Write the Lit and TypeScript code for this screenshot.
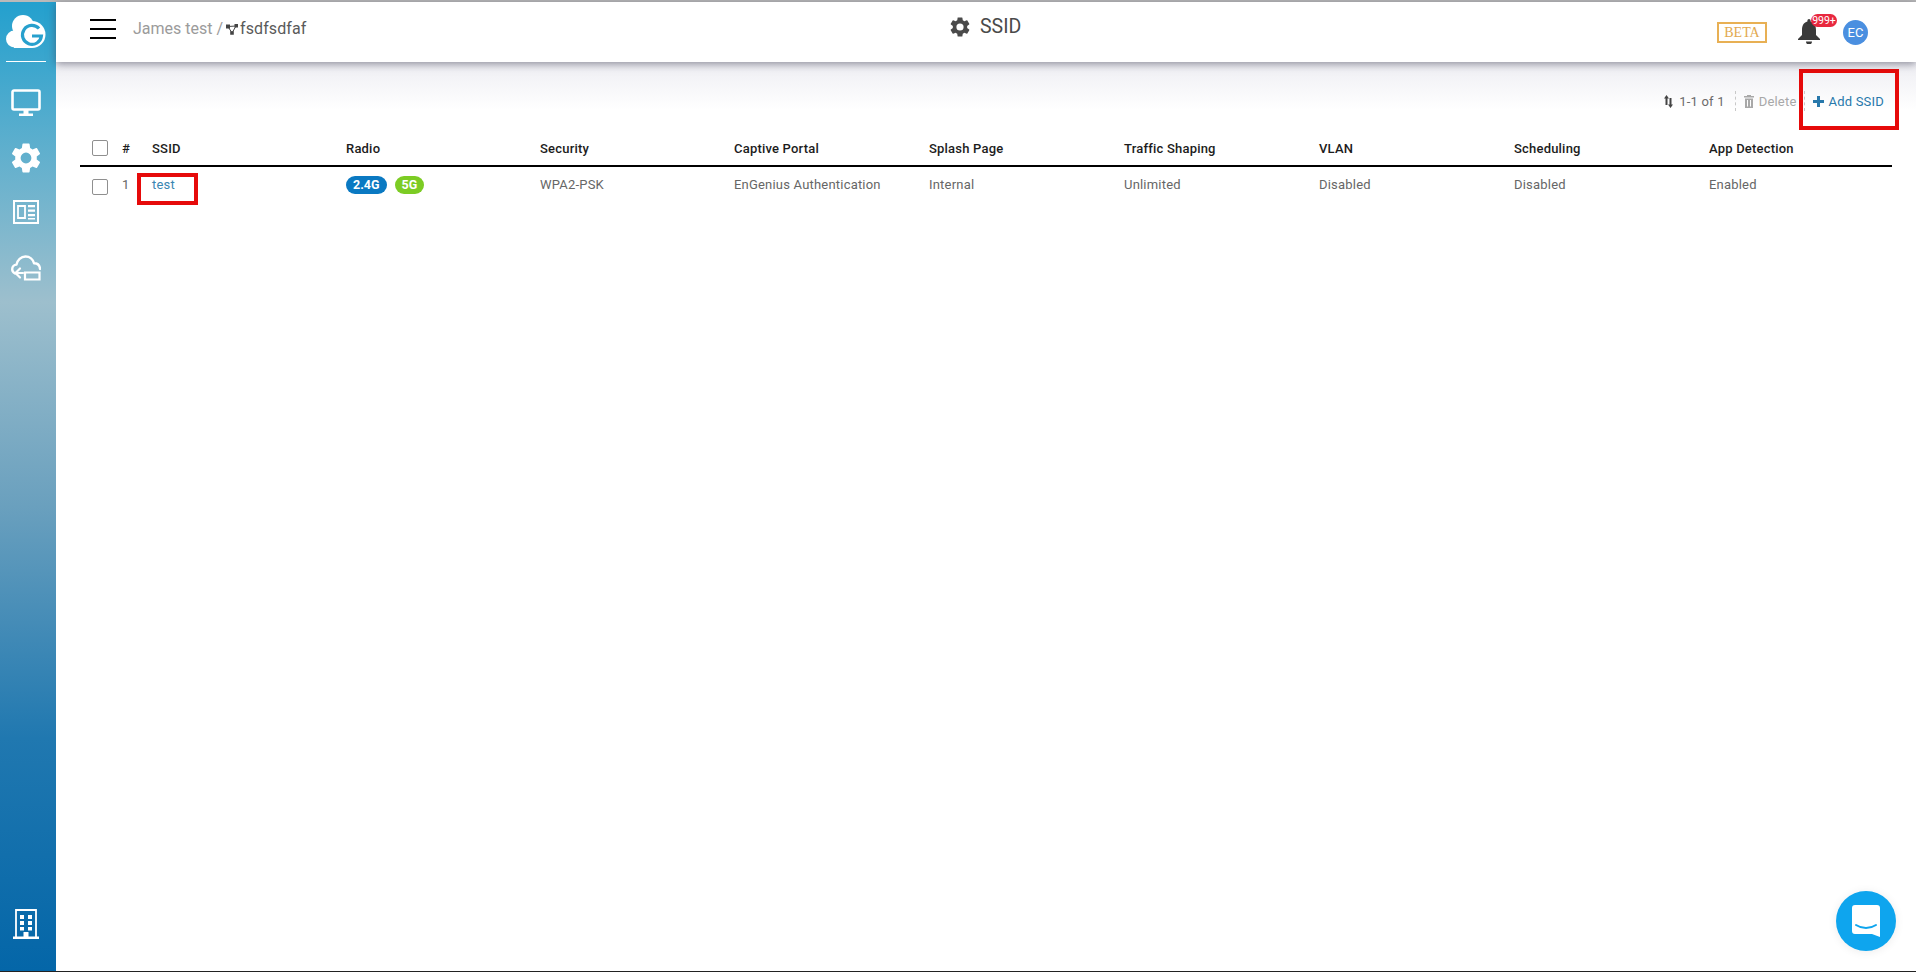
import { LitElement, html, css } from "lit";
import { customElement } from "lit/decorators.js";

const GEAR = "M19.14 12.94c.04-.3.06-.61.06-.94 0-.32-.02-.64-.07-.94l2.03-1.58a.49.49 0 0 0 .12-.61l-1.92-3.32a.488.488 0 0 0-.59-.22l-2.39.96c-.5-.38-1.03-.7-1.62-.94l-.36-2.54a.484.484 0 0 0-.48-.41h-3.84c-.24 0-.43.17-.47.41l-.36 2.54c-.59.24-1.13.57-1.62.94l-2.39-.96a.48.48 0 0 0-.59.22L2.74 8.87c-.12.21-.08.47.12.61l2.03 1.58c-.05.3-.09.63-.09.94s.02.64.07.94l-2.03 1.58a.49.49 0 0 0-.12.61l1.92 3.32c.12.22.37.29.59.22l2.39-.96c.5.38 1.03.7 1.62.94l.36 2.54c.05.24.24.41.48.41h3.84c.24 0 .44-.17.47-.41l.36-2.54c.59-.24 1.13-.56 1.62-.94l2.39.96c.22.08.47 0 .59-.22l1.92-3.32c.12-.22.07-.47-.12-.61l-2.01-1.58zM12 15.6A3.6 3.6 0 1 1 12 8.4a3.6 3.6 0 0 1 0 7.2z";

const columns = ["SSID", "Radio", "Security", "Captive Portal", "Splash Page", "Traffic Shaping", "VLAN", "Scheduling", "App Detection"];
const cells = ["WPA2-PSK", "EnGenius Authentication", "Internal", "Unlimited", "Disabled", "Disabled", "Enabled"];

@customElement("app-root")
export class AppRoot extends LitElement {
  static styles = css`
    :host {
      display: block;
      height: 972px;
      font-family: Roboto, "Liberation Sans", sans-serif;
      background: #fff;
      overflow: hidden;
    }
    .page {
      position: relative;
      display: flex;
      height: 972px;
      box-sizing: border-box;
      border-top: 2px solid #b9b9b9;
      border-bottom: 1px solid #222;
    }
    .side {
      width: 56px;
      flex: none;
      box-sizing: border-box;
      padding-right: 4px;
      display: flex;
      flex-direction: column;
      align-items: center;
      background: linear-gradient(180deg, #23a0ce 0%, #9dbfcd 31%, #6aa0be 52%, #2078b0 76%, #0466a8 100%);
    }
    .logo { margin-top: 13px; display: block; }
    .logo-line { width: 40px; height: 1px; background: #fff; margin-top: 13px; }
    .side svg { display: block; flex: none; }
    .i-mon { margin-top: 27px; }
    .i-gear { margin-top: 24px; }
    .i-news { margin-top: 24px; }
    .i-cloud { margin-top: 31px; }
    .spacer { flex: 1; }
    .side .bldg { margin-bottom: 32px; }
    .main { flex: 1; display: flex; flex-direction: column; min-width: 0; }
    .top {
      height: 60px;
      flex: none;
      display: flex;
      align-items: flex-start;
      background: #fff;
      box-shadow: 0 2px 8px rgba(60, 60, 80, 0.55);
      position: relative;
      z-index: 1;
    }
    .burger { margin: 17px 0 0 34px; width: 26px; display: flex; flex-direction: column; gap: 7px; }
    .burger i { display: block; height: 2px; background: #000; }
    .crumb {
      margin: 15px 0 0 17px;
      width: 318px;
      font-size: 16px;
      line-height: 24px;
      color: #9b9b9b;
      display: flex;
      align-items: center;
      white-space: nowrap;
    }
    .crumb svg { margin: 0 2px 0 3px; }
    .crumb b { font-weight: 400; color: #5a5a5a; letter-spacing: 0.1px; }
    .title {
      margin: 13px 0 0 497px;
      display: flex;
      align-items: center;
      gap: 8px;
      font-size: 19.5px;
      line-height: 24px;
      color: #4a4a4a;
    }
    .right { margin-left: auto; padding-right: 48px; display: flex; align-items: flex-start; }
    .beta {
      margin-top: 20px;
      box-sizing: border-box;
      width: 50px;
      height: 21px;
      border: 2px solid #e8b054;
      color: #e2a94f;
      font-family: "Liberation Serif", serif;
      font-size: 14px;
      line-height: 17px;
      text-align: center;
    }
    .bell { position: relative; margin: 17px 0 0 31px; width: 22px; height: 25px; }
    .bell svg { display: block; }
    .badge {
      position: absolute;
      left: 13px;
      top: -5px;
      width: 26px;
      height: 13px;
      border-radius: 7px;
      background: #e8283f;
      color: #fff;
      font-size: 10.5px;
      line-height: 13px;
      text-align: center;
    }
    .avatar {
      margin: 18px 0 0 23px;
      width: 25px;
      height: 25px;
      border-radius: 50%;
      background: #4a8fe0;
      color: #fff;
      font-size: 13px;
      line-height: 25px;
      text-align: center;
    }
    .body {
      flex: 1;
      padding: 0 24px;
      background: linear-gradient(180deg, #eeeef3 0, #fff 48px);
    }
    .tools {
      height: 58px;
      margin-top: 10px;
      display: flex;
      align-items: center;
      justify-content: flex-end;
      font-size: 13px;
      letter-spacing: 0.2px;
      color: #6b6b6b;
      padding-right: 8px;
    }
    .group { display: flex; align-items: center; height: 20px; white-space: nowrap; }
    .sep { border-left: 1px dashed #c8c8c8; height: 20px; }
    .sep-a { margin: 0 8px 0 10px; }
    .sep-b { margin: 0 8px 0 7px; }
    .del { color: #a8a8a8; }
    .add { color: #2778ab; }
    .tools svg { display: block; margin-right: 5px; }
    .tools .sort { margin-right: 6px; }
    .row {
      display: grid;
      grid-template-columns: 30px 30px repeat(3, 194px) repeat(5, 195px) 1fr;
      padding-left: 12px;
      font-size: 13px;
      letter-spacing: 0.2px;
    }
    .head { height: 37px; box-sizing: border-box; align-items: center; color: #1c1c1c; font-weight: 500; border-bottom: 2px solid #000; }
    .head .lbl { padding-top: 2px; }
    .data { height: 34px; align-items: center; color: #666; }
    .box { width: 16px; height: 16px; box-sizing: border-box; border: 1px solid #8f8f8f; border-radius: 2px; background: #fff; }
    .data .box { margin-top: 6px; }
    .link { color: #3a86b2; }
    .pills { display: flex; gap: 8px; margin-top: 2px; }
    .pill {
      height: 18px;
      border-radius: 9px;
      color: #fff;
      font-size: 12.5px;
      font-weight: 700;
      letter-spacing: 0;
      line-height: 18px;
      padding: 0 7px;
    }
    .p24 { background: #0a79c2; }
    .p5 { background: #7ccc24; }
    .mark { position: absolute; box-sizing: border-box; border: 4px solid #e60a0a; pointer-events: none; }
    .m-add { left: 1799px; top: 67px; width: 100px; height: 61px; }
    .m-test { left: 137px; top: 171px; width: 61px; height: 32px; }
    .chat {
      position: absolute;
      right: 20px;
      bottom: 20px;
      width: 60px;
      height: 60px;
      border-radius: 50%;
      background: #0ea5ee;
      box-shadow: 0 1px 10px rgba(0, 0, 0, 0.08);
      display: flex;
      align-items: center;
      justify-content: center;
    }
  `;

  render() {
    return html`
      <div class="page">
        <aside class="side">
          <svg class="logo" width="40" height="33" viewBox="0 0 40 33">
            <g fill="#fff">
              <circle cx="26" cy="19.500" r="13.500"/>
              <circle cx="17" cy="11" r="11"/>
              <circle cx="8.500" cy="24" r="8.500"/>
              <path d="M8 20h18v13H8z"/>
            </g>
            <path fill="none" stroke="#27a0cd" stroke-width="3.200" d="M33 13.500a9.500 9.500 0 1 0 2.400 7.500H26"/>
          </svg>
          <div class="logo-line"></div>
          <svg class="i-mon" width="30" height="27" viewBox="0 0 30 27">
            <path fill="none" stroke="#fff" stroke-width="2.600" d="M3 1.500h24a1.500 1.500 0 0 1 1.500 1.500v16a1.500 1.500 0 0 1-1.500 1.500H3A1.500 1.500 0 0 1 1.500 19V3A1.500 1.500 0 0 1 3 1.500z"/>
            <path fill="#fff" d="M12.500 21h5v3.500h-5zM8 24.500h14V27H8z"/>
          </svg>
          <svg class="i-gear" width="36" height="36" viewBox="0 0 24 24"><path fill="#fff" d="${GEAR}"/></svg>
          <svg class="i-news" width="26" height="24" viewBox="0 0 26 24">
            <path fill="none" stroke="#fff" stroke-width="2" d="M1 1h24v22H1z"/>
            <path fill="none" stroke="#fff" stroke-width="1.800" d="M5 6h7v12H5z"/>
            <path fill="#fff" d="M15 5h7v2.200h-7zM15 9.500h7v2.200h-7zM15 14h7v2.200h-7zM15 18h7v1.500h-7z"/>
          </svg>
          <svg class="i-cloud" width="30" height="26" viewBox="0 0 30 26">
            <path fill="none" stroke="#fff" stroke-width="2.400" stroke-linecap="round" stroke-linejoin="round" d="M4 18.500C2 17.500 1.200 15.800 1.200 14.300c0-2.400 1.800-4.500 4.300-4.700C6.300 5 10 1.500 14.500 1.500c4.200 0 7.600 2.900 8.500 6.800 3.400 0 5.800 2.200 6 5.700"/>
            <path fill="none" stroke="#fff" stroke-width="2.200" d="M14 17.500h14.500v7H14z"/>
            <path fill="none" stroke="#fff" stroke-width="2.200" stroke-linecap="round" stroke-linejoin="round" d="M9 13.500L4.500 18 9 22.500M5 18h7"/>
          </svg>
          <div class="spacer"></div>
          <svg class="bldg" width="26" height="30" viewBox="0 0 26 30">
            <path fill="none" stroke="#fff" stroke-width="1.800" d="M3 29V1h20v28"/>
            <path fill="#fff" d="M0 27.500h26V30H0zM10.500 23h5v5h-5zM7 6h4v4H7zM15 6h4v4h-4zM7 12h4v4H7zM15 12h4v4h-4zM7 18h4v3.500H7zM15 18h4v3.500h-4z"/>
          </svg>
        </aside>
        <div class="main">
          <header class="top">
            <div class="burger"><i></i><i></i><i></i></div>
            <div class="crumb">James test /
              <svg width="12" height="11" viewBox="0 0 12 11">
                <path fill="none" stroke="#444" stroke-width="1" d="M2 2.500L10 2 6 9z"/>
                <path fill="#444" d="M0 .5h4v4H0zM8.500 0H12v3.500H8.500zM4.200 7.200h3.600v3.600H4.200z"/>
              </svg>
              <b>fsdfsdfaf</b>
            </div>
            <div class="title">
              <svg width="24" height="24" viewBox="0 0 24 24"><path fill="#4a4a4a" d="${GEAR}"/></svg>
              <span>SSID</span>
            </div>
            <div class="right">
              <div class="beta">BETA</div>
              <div class="bell">
                <svg width="22" height="25" viewBox="0 0 22 25"><path fill="#3a3a3a" d="M11 0a1.600 1.600 0 0 1 1.600 1.600v1C16.500 3.600 18 7 18 11v5l4 4v1H0v-1l4-4v-5C4 7 5.500 3.600 9.400 2.600v-1A1.600 1.600 0 0 1 11 0zM8 22.500h6a3 3 0 0 1-6 0z"/></svg>
                <div class="badge">999+</div>
              </div>
              <div class="avatar">EC</div>
            </div>
          </header>
          <main class="body">
            <div class="tools">
              <div class="group">
                <svg class="sort" width="9" height="13" viewBox="0 0 9 13"><path fill="#444" d="M2.500 0L5 3.500H3.500V10h-2V3.500H0zM6.500 13L4 9.500h1.500V3h2v6.500H9z"/></svg>
                1-1 of 1
                <span class="sep sep-a"></span>
                <svg width="10" height="13" viewBox="0 0 10 13"><path fill="#a8a8a8" fill-rule="evenodd" d="M1 3.500h8V13H1zM3 5v6.500h1V5zM6 5v6.500h1V5zM0 1h3V0h4v1h3v1.500H0z"/></svg>
                <span class="del">Delete</span>
                <span class="sep sep-b"></span>
                <svg width="11" height="11" viewBox="0 0 11 11"><path fill="#2778ab" d="M4 0h3v4h4v3H7v4H4V7H0V4h4z"/></svg>
                <span class="add">Add SSID</span>
              </div>
            </div>
            <div class="row head">
              <div class="box"></div><div class="lbl">#</div>
              ${columns.map((c) => html`<div class="lbl">${c}</div>`)}
            </div>
            <div class="row data">
              <div class="box"></div><div>1</div>
              <div class="link">test</div>
              <div class="pills"><span class="pill p24">2.4G</span><span class="pill p5">5G</span></div>
              ${cells.map((c) => html`<div>${c}</div>`)}
            </div>
          </main>
        </div>
        <div class="mark m-add"></div>
        <div class="mark m-test"></div>
        <div class="chat">
          <svg width="28" height="32" viewBox="0 0 28 32">
            <path fill="#fff" d="M3 0h22a3 3 0 0 1 3 3v29l-8-3H3a3 3 0 0 1-3-3V3a3 3 0 0 1 3-3z"/>
            <path fill="none" stroke="#0ea5ee" stroke-width="2" stroke-linecap="round" d="M4 20c6 4 14 4 20 0"/>
          </svg>
        </div>
      </div>
    `;
  }
}
